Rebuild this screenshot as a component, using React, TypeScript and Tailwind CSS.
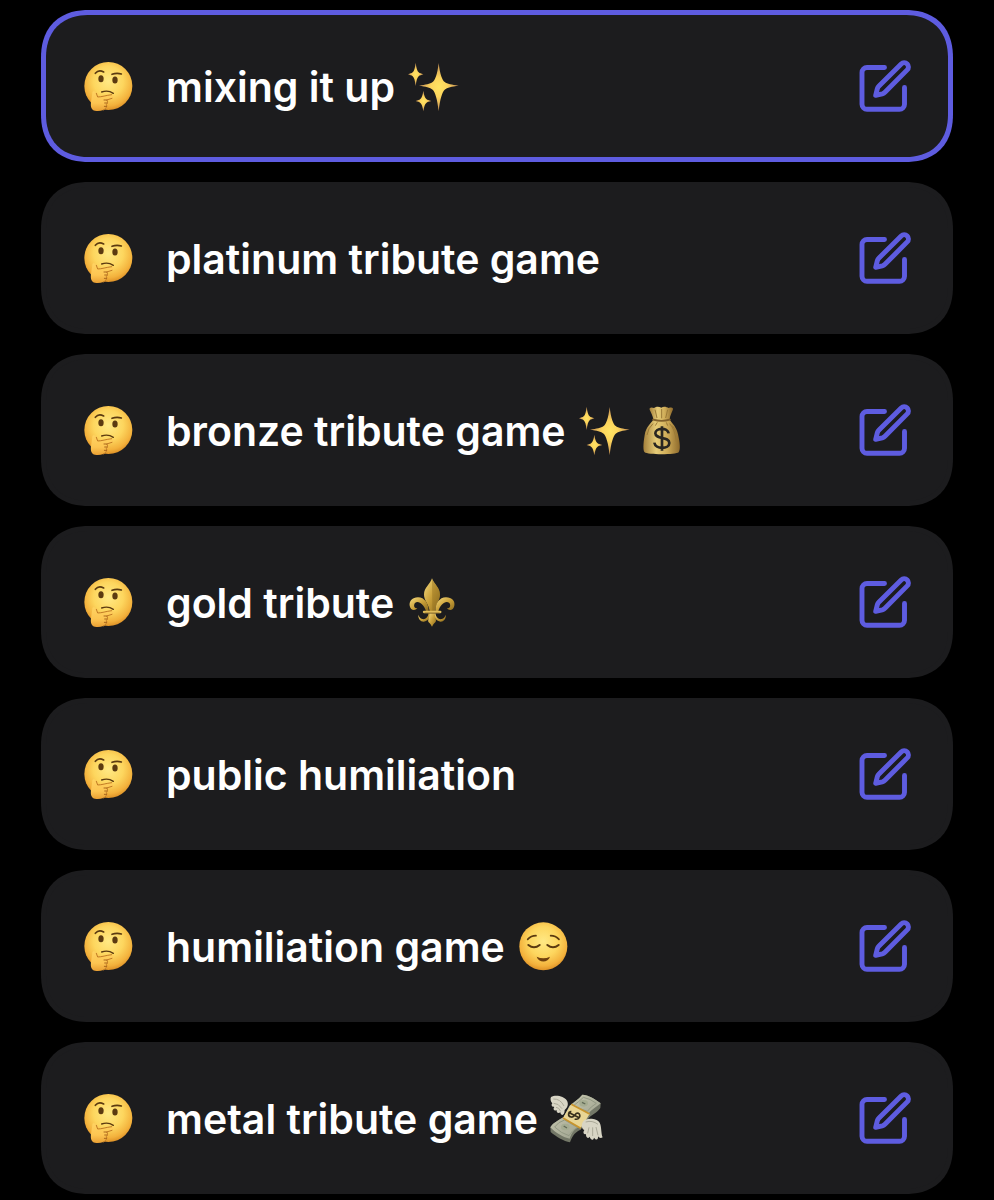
import { useState, type ReactNode } from "react";

type EmojiName = "thinking" | "sparkles" | "moneyBag" | "fleur" | "relieved" | "moneyWings";

function Gradients() {
  return (
    <svg className="absolute h-0 w-0" aria-hidden="true">
      <defs>
        <radialGradient id="face" cx="0.5" cy="0.4" r="0.62">
          <stop offset="0" stopColor="#ffe985" />
          <stop offset="0.5" stopColor="#fdd65e" />
          <stop offset="0.82" stopColor="#f3b13c" />
          <stop offset="1" stopColor="#d98a22" />
        </radialGradient>
        <linearGradient id="hand" x1="0" y1="0" x2="0" y2="1">
          <stop offset="0" stopColor="#ffd362" />
          <stop offset="0.6" stopColor="#fdc552" />
          <stop offset="1" stopColor="#e99f33" />
        </linearGradient>
        <radialGradient id="spark">
          <stop offset="0" stopColor="#ffe463" />
          <stop offset="0.4" stopColor="#fcd45c" />
          <stop offset="1" stopColor="#c48f55" />
        </radialGradient>
        <linearGradient id="bag" x1="0" y1="0" x2="1" y2="0">
          <stop offset="0" stopColor="#a5813c" />
          <stop offset="0.35" stopColor="#e6cc78" />
          <stop offset="0.65" stopColor="#cfac58" />
          <stop offset="1" stopColor="#8e6a2c" />
        </linearGradient>
        <linearGradient id="gold" x1="0" y1="0" x2="1" y2="1">
          <stop offset="0" stopColor="#f6dc80" />
          <stop offset="0.5" stopColor="#caa13a" />
          <stop offset="1" stopColor="#8c6a1c" />
        </linearGradient>
        <linearGradient id="note" x1="0" y1="0" x2="1" y2="1">
          <stop offset="0" stopColor="#d3d3b9" />
          <stop offset="1" stopColor="#8f9483" />
        </linearGradient>
      </defs>
    </svg>
  );
}

const emojiArt: Record<EmojiName, { label: string; viewBox: string; art: ReactNode }> = {
  thinking: {
    label: "thinking face",
    viewBox: "36 45 156 156",
    art: (
      <>
        <circle cx="115" cy="123" r="72" fill="url(#face)" />
        <g fill="none" stroke="#5b3a10" strokeLinecap="round" strokeWidth="5">
          <path d="M76 85 Q86 73 101 81" />
          <path d="M126 88 Q140 83 154 87" />
          <path d="M95 141 Q114 134 130 145" strokeWidth="4" />
        </g>
        <ellipse cx="93" cy="101" rx="8" ry="10.500" fill="#5b3a10" />
        <ellipse cx="135" cy="105" rx="8" ry="10.500" fill="#5b3a10" />
        <path
          d="M67 144 C67 136 77 137 79 145 L83 156 C95 156 108 151 125 149 C134 149 133 158 126 160 L110 165 C114 169 113 175 109 178 C112 184 108 192 100 195 C90 199 76 200 68 194 C61 188 62 176 64 166 Z"
          fill="url(#hand)"
        />
        <path d="M79 145 L83 156 C95 156 108 151 125 149 M126 160 L110 165 C114 169 113 175 109 178 C112 184 108 192 100 195" fill="none" stroke="#c27b25" strokeWidth="3" strokeLinecap="round" />
        <path d="M102 165 H111 M104 174 L111 174 M103 184 L110 184" fill="none" stroke="#a9661d" strokeWidth="3" strokeLinecap="round" />
      </>
    ),
  },
  sparkles: {
    label: "sparkles",
    viewBox: "24 30 156 156",
    art: (
      <g fill="url(#spark)">
        <path d="M119 39 C123 74 130 91 137 96 C145 102 158 104 179 107 C158 110 145 112 137 119 C130 126 123 146 119 184 C115 146 108 126 101 119 C93 112 80 110 60 107 C80 104 93 102 101 96 C108 91 115 74 119 39 Z" />
        <path d="M50 38 C52 55 55 64 59 67 C62 70 67 71 73 73 C67 75 62 76 59 79 C55 82 52 91 50 108 C48 91 45 82 41 79 C38 76 33 75 27 73 C33 71 38 70 41 67 C45 64 48 55 50 38 Z" />
        <path d="M73 122 C75 136 78 144 82 147 C85 150 90 151 97 153 C90 155 85 156 82 159 C78 162 75 170 73 184 C71 170 68 162 64 159 C61 156 56 155 50 153 C56 151 61 150 64 147 C68 144 71 136 73 122 Z" />
      </g>
    ),
  },
  moneyBag: {
    label: "money bag",
    viewBox: "198 27 156 156",
    art: (
      <>
        <path d="M250 74 C244 84 228 94 224 120 C219 149 219 166 224 172 C232 180 318 180 326 172 C332 164 330 144 324 118 C320 96 306 84 299 74 Z" fill="url(#bag)" />
        <path d="M239 44 C237 37 245 36 252 39 C260 33 268 35 274 38 C281 33 290 36 296 39 C305 36 312 38 308 46 C304 55 300 63 299 73 Q275 80 250 73 C249 63 243 53 239 44 Z" fill="url(#bag)" />
        <path d="M249 74 Q275 81 300 74" stroke="#80602b" strokeWidth="5" fill="none" strokeLinecap="round" />
        <path d="M255 44 L261 69 M275 42 V70 M293 44 L287 69 M249 86 Q234 99 231 120 M299 86 Q315 103 319 139 M307 92 Q317 104 321 120 M262 82 L256 92 M289 82 L293 92" stroke="#9b7a37" strokeWidth="3" fill="none" />
        <path d="M296 115 C293 96 256 98 256 115 C256 134 298 124 298 144 C298 163 256 164 253 143 M276 94 V167" fill="none" stroke="#292621" strokeWidth="8" />
      </>
    ),
  },
  fleur: {
    label: "fleur-de-lis",
    viewBox: "24 18 156 156",
    art: (
      <g>
        <path d="M102 25 C108 42 126 53 126 74 C126 91 112 103 111 123 H95 C93 103 78 91 78 74 C78 53 97 42 102 25 Z" fill="url(#gold)" />
        <path d="M102 27 C108 42 126 53 126 74 C126 91 112 103 111 123 H103 Z" fill="#8d6b20" opacity="0.4" />
        <g fill="url(#gold)">
          <path d="M92 123 C92 101 80 82 60 82 C43 82 33 94 35 107 C37 119 49 125 58 115 C48 116 46 105 51 99 C60 90 77 101 84 123 Z" />
          <path d="M112 123 C112 101 124 82 144 82 C162 82 172 94 169 107 C167 119 155 125 147 115 C157 116 159 105 154 99 C144 90 128 101 121 123 Z" />
          <path d="M92 129 C90 143 82 149 73 147 C67 146 63 140 61 134 C60 148 70 158 82 154 C91 151 96 143 97 132 Z" />
          <path d="M112 129 C114 143 122 149 131 147 C138 146 141 140 143 134 C145 148 134 158 123 154 C114 151 109 143 108 132 Z" />
          <path d="M95 130 H110 C111 145 117 151 112 157 C107 161 105 165 102 170 C99 165 97 161 92 157 C88 151 94 145 95 130 Z" />
        </g>
        <path d="M78 126 H127" stroke="#e0bd5a" strokeWidth="7" strokeLinecap="round" />
        <path d="M80 129 H125" stroke="#70531b" strokeWidth="2" />
      </g>
    ),
  },
  relieved: {
    label: "relieved face",
    viewBox: "27 30 156 156",
    art: (
      <>
        <circle cx="106" cy="109" r="72" fill="url(#face)" />
        <g fill="none" stroke="#5b3a10" strokeLinecap="round" strokeWidth="5">
          <path d="M59 88 Q69 77 84 77" />
          <path d="M128 77 Q143 77 153 88" />
          <path d="M61 105 Q78 119 95 105" strokeWidth="6" />
          <path d="M118 105 Q135 119 152 105" strokeWidth="6" />
        </g>
        <path d="M86 140 Q106 150 126 140 C121 159 91 159 86 140 Z" fill="#70400e" />
      </>
    ),
  },
  moneyWings: {
    label: "money with wings",
    viewBox: "36 36 156 156",
    art: (
      <>
        <path d="M95 77 C109 65 121 58 133 44 C151 45 171 56 188 70 L187 84 C176 99 163 103 153 113 L128 149 C114 154 103 166 96 187 C78 184 53 169 38 156 L37 142 C45 128 65 119 77 111 Z" fill="#737767" />
        <path d="M95 77 C109 65 121 58 133 44 C151 45 171 56 188 70 C174 82 160 89 150 103 L125 140 C109 145 101 158 95 176 C77 173 52 158 37 142 C45 128 65 119 77 111 Z" fill="url(#note)" />
        <path d="M105 78 C117 69 127 61 136 52 Q157 56 175 70 Q158 80 148 94 Z M50 141 Q61 125 80 120 L118 142 Q102 151 93 167 Q69 160 50 141 Z" fill="none" stroke="#929883" strokeWidth="3" />
        <ellipse cx="137" cy="70" rx="13" ry="10" fill="#a5ac91" />
        <ellipse cx="82" cy="141" rx="13" ry="10" fill="#a5ac91" />
        <path d="M132 67 L142 72 M77 138 L87 144" stroke="#626b57" strokeWidth="4" />
        <path d="M100 73 L155 102 L128 145 L75 114 Z" fill="#e9d594" />
        <path d="M100 73 L155 102 M75 114 L128 145" stroke="#c8942c" strokeWidth="5" />
        <path d="M100 95 C90 94 88 109 100 111 C112 113 110 96 121 100 C131 105 123 121 110 117 M91 97 L125 114" fill="none" stroke="#39301c" strokeWidth="5" />
        <path d="M39 51 C53 43 79 49 86 61 C93 71 89 84 80 90 C80 99 77 104 73 105 C68 104 68 101 67 97 C61 101 55 98 56 91 C48 93 44 87 49 81 C42 81 38 76 43 70 C38 65 36 57 39 51 Z" fill="#d8d5c5" />
        <path d="M46 57 Q67 56 78 78 M47 70 Q61 69 72 86 M54 82 Q63 82 68 94" fill="none" stroke="#aba998" strokeWidth="3" />
        <path d="M135 125 C145 112 177 115 185 128 C191 139 189 162 194 172 C188 176 183 173 180 169 C181 181 174 181 168 173 C166 183 158 180 155 170 C150 178 143 172 144 162 C136 165 134 157 139 150 C131 146 129 134 135 125 Z" fill="#d8d5c5" />
        <path d="M143 126 Q163 120 180 133 M153 142 L149 160 M164 142 L164 168 M174 141 L180 166" fill="none" stroke="#aba998" strokeWidth="3" />
      </>
    ),
  },
};

function Emoji({ name }: { name: EmojiName }) {
  const { label, viewBox, art } = emojiArt[name];
  return (
    <svg className="size-[52px] shrink-0 overflow-visible" viewBox={viewBox} role="img" aria-label={label}>
      {art}
    </svg>
  );
}

function EditIcon() {
  return (
    <svg
      className="size-[52px]"
      viewBox="0 0 52 52"
      fill="none"
      stroke="currentColor"
      strokeWidth="4.9"
      strokeLinecap="round"
      strokeLinejoin="round"
      aria-hidden="true"
    >
      <path d="M25.5 7.5 H8 A5 5 0 0 0 3 12.5 V44.3 A5 5 0 0 0 8 49.3 H40.5 A5 5 0 0 0 45.5 44.3 V27.5" />
      <path d="M42.2 3.9 L20 26 Q18.8 27.2 18.3 28.8 L16.7 35.3 L23.3 33.8 Q25 33.300 26.2 32.1 L48.2 9.9 A4.24 4.24 0 0 0 42.2 3.9 Z" />
    </svg>
  );
}

const games: { title: string; emojis: EmojiName[] }[] = [
  { title: "mixing it up", emojis: ["sparkles"] },
  { title: "platinum tribute game", emojis: [] },
  { title: "bronze tribute game", emojis: ["sparkles", "moneyBag"] },
  { title: "gold tribute", emojis: ["fleur"] },
  { title: "public humiliation", emojis: [] },
  { title: "humiliation game", emojis: ["relieved"] },
  { title: "metal tribute game", emojis: ["moneyWings"] },
];

export default function App() {
  const [selected, setSelected] = useState(0);

  return (
    <main className="min-h-screen bg-black px-[41px] pt-[10px] pb-[6px] font-['Inter',sans-serif] text-white">
      <Gradients />
      <ul className="flex flex-col gap-5">
        {games.map((game, index) => (
          <li
            key={game.title}
            className={`flex h-[152px] items-center rounded-[48px] border-[5px] bg-[#1c1c1e] pr-[37px] [corner-shape:superellipse(1.2)] ${
              index === selected ? "border-[#5e5ce0]" : "border-[#1c1c1e]"
            }`}
          >
            <button
              type="button"
              aria-pressed={index === selected}
              onClick={() => setSelected(index)}
              className="flex h-full min-w-0 flex-1 items-center gap-8 pl-9 text-left"
            >
              <Emoji name="thinking" />
              <span className="flex items-center gap-3">
                <span className="pt-[2px] text-[41px] leading-[52px] font-semibold">{game.title}</span>
                {game.emojis.length > 0 && (
                  <span className="flex gap-[6px]">
                    {game.emojis.map((name) => (
                      <Emoji key={name} name={name} />
                    ))}
                  </span>
                )}
              </span>
            </button>
            <button type="button" aria-label={`Edit ${game.title}`} className="shrink-0 text-[#5e5ce0]">
              <EditIcon />
            </button>
          </li>
        ))}
      </ul>
    </main>
  );
}
